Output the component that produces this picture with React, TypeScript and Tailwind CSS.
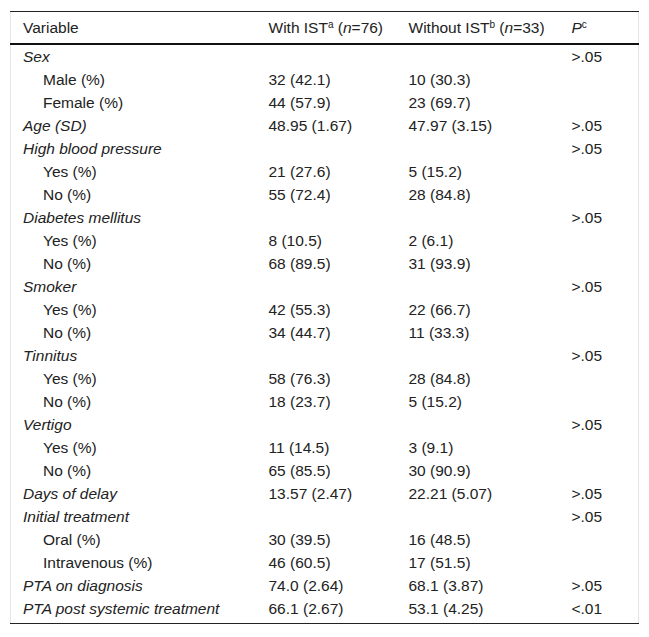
type Row = {
  label: string;
  sub?: boolean;
  a?: string;
  b?: string;
  p?: string;
};

const rows: Row[] = [
  { label: "Sex", p: ">.05" },
  { label: "Male (%)", sub: true, a: "32 (42.1)", b: "10 (30.3)" },
  { label: "Female (%)", sub: true, a: "44 (57.9)", b: "23 (69.7)" },
  { label: "Age (SD)", a: "48.95 (1.67)", b: "47.97 (3.15)", p: ">.05" },
  { label: "High blood pressure", p: ">.05" },
  { label: "Yes (%)", sub: true, a: "21 (27.6)", b: "5 (15.2)" },
  { label: "No (%)", sub: true, a: "55 (72.4)", b: "28 (84.8)" },
  { label: "Diabetes mellitus", p: ">.05" },
  { label: "Yes (%)", sub: true, a: "8 (10.5)", b: "2 (6.1)" },
  { label: "No (%)", sub: true, a: "68 (89.5)", b: "31 (93.9)" },
  { label: "Smoker", p: ">.05" },
  { label: "Yes (%)", sub: true, a: "42 (55.3)", b: "22 (66.7)" },
  { label: "No (%)", sub: true, a: "34 (44.7)", b: "11 (33.3)" },
  { label: "Tinnitus", p: ">.05" },
  { label: "Yes (%)", sub: true, a: "58 (76.3)", b: "28 (84.8)" },
  { label: "No (%)", sub: true, a: "18 (23.7)", b: "5 (15.2)" },
  { label: "Vertigo", p: ">.05" },
  { label: "Yes (%)", sub: true, a: "11 (14.5)", b: "3 (9.1)" },
  { label: "No (%)", sub: true, a: "65 (85.5)", b: "30 (90.9)" },
  { label: "Days of delay", a: "13.57 (2.47)", b: "22.21 (5.07)", p: ">.05" },
  { label: "Initial treatment", p: ">.05" },
  { label: "Oral (%)", sub: true, a: "30 (39.5)", b: "16 (48.5)" },
  { label: "Intravenous (%)", sub: true, a: "46 (60.5)", b: "17 (51.5)" },
  { label: "PTA on diagnosis", a: "74.0 (2.64)", b: "68.1 (3.87)", p: ">.05" },
  { label: "PTA post systemic treatment", a: "66.1 (2.67)", b: "53.1 (4.25)", p: "<.01" },
];

export default function App() {
  return (
    <div className="min-h-screen bg-white pt-[11px] pl-[10px] text-[15.5px] leading-[23px] text-[#222] font-['Liberation_Sans',Arial,sans-serif]">
      <table className="w-[629px] table-fixed border-collapse border-x border-x-[#e5e5e5]">
        <thead>
          <tr className="border-t border-t-[#222] border-b-2 border-b-[#111]">
            <th className="w-[258px] h-[32px] pl-[12px] text-left font-normal">Variable</th>
            <th className="w-[140px] text-left font-normal">
              With IST<sup className="text-[10px]">a</sup> (<i>n</i>=76)
            </th>
            <th className="w-[163px] text-left font-normal">
              Without IST<sup className="text-[10px]">b</sup> (<i>n</i>=33)
            </th>
            <th className="text-left font-normal">
              <i>P</i>
              <sup className="text-[10px]">c</sup>
            </th>
          </tr>
        </thead>
        <tbody>
          {rows.map((r, i) => (
            <tr key={i} className="h-[23px]">
              <td className={r.sub ? "pl-[32px]" : "pl-[12px] italic"}>{r.label}</td>
              <td>{r.a}</td>
              <td>{r.b}</td>
              <td>{r.p}</td>
            </tr>
          ))}
          <tr className="h-[4px] border-b border-b-[#222]">
            <td colSpan={4}></td>
          </tr>
        </tbody>
      </table>
    </div>
  );
}
